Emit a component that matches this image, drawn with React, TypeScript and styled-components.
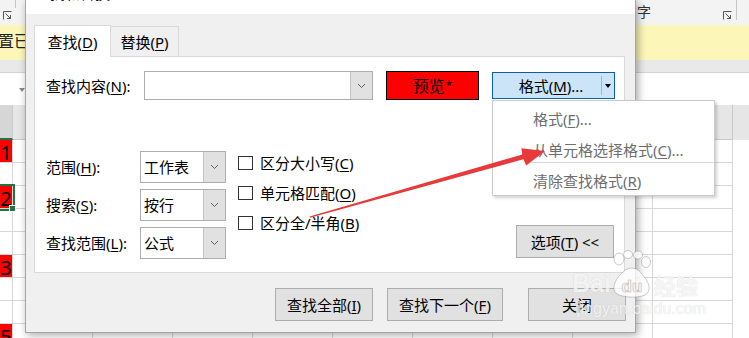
import React from "react";
import styled, { createGlobalStyle, css } from "styled-components";

const FONT = `"Noto Sans", "Noto Sans CJK SC", sans-serif`;

const Global = createGlobalStyle`
  html, body { margin: 0; padding: 0; background: #fff; }
  body { width: 749px; height: 338px; overflow: hidden; font-family: ${FONT}; }
`;

const Page = styled.div`
  position: relative;
  width: 749px;
  height: 338px;
  overflow: hidden;
  background: #fff;
`;

/* ---------- spreadsheet behind ---------- */
const Sheet = styled.div`
  display: flex;
  flex-direction: column;
  width: 749px;
`;

const Ribbon = styled.div`
  height: 25px;
  background: #f3f3f3;
  display: flex;
  align-items: flex-start;
`;

const Launcher = styled.svg<{ $ml: number }>`
  flex: none;
  margin: 11px 0 0 ${(p) => p.$ml}px;
`;

const RibbonTick = styled.div<{ $ml: number; $h: number }>`
  flex: none;
  width: 1px;
  height: ${(p) => p.$h}px;
  margin-left: ${(p) => p.$ml}px;
  background: #c6c6c6;
`;

const Gap = styled.div<{ $w: number }>`
  flex: none;
  width: ${(p) => p.$w}px;
`;

const GroupLabel = styled.div`
  flex: none;
  width: 14px;
  margin-top: 3px;
  font: 14px/18px ${FONT};
  color: #333;
`;

const MsgBar = styled.div`
  height: 35px;
  background: #fcf6b9;
  box-sizing: border-box;
  padding-top: 5px;
  font: 16px/22px ${FONT};
  color: #222;
  white-space: nowrap;
  overflow: hidden;
`;

const MsgText = styled.span`
  margin-left: -2px;
`;

const Strip = styled.div`
  height: 13px;
  background: #e9e9e9;
  border-bottom: 1px solid #d2d2d2;
  box-sizing: border-box;
`;

const FormulaBar = styled.div`
  height: 32px;
  background: #fff;
  display: flex;
  align-items: center;
  padding-left: 19px;
`;

const NameTri = styled.div`
  width: 0;
  height: 0;
  border-left: 3px solid transparent;
  border-right: 3px solid transparent;
  border-top: 4px solid #8a8a8a;
  margin-top: 2px;
`;

const Row = styled.div<{ $h?: number; $bg?: string }>`
  display: flex;
  flex: none;
  height: ${(p) => p.$h ?? 23}px;
  background: ${(p) => p.$bg ?? "#fff"};
`;

const Cell = styled.div<{ $w: number; $red?: boolean; $sel?: boolean; $head?: boolean; $hl?: boolean }>`
  flex: none;
  position: relative;
  width: ${(p) => p.$w}px;
  box-sizing: border-box;
  border-right: 1px solid ${(p) => (p.$head ? "#c9c9c9" : "#d6d6d6")};
  border-bottom: 1px solid ${(p) => (p.$head ? "#c9c9c9" : "#d6d6d6")};
  background: ${(p) => (p.$red ? "#ff0000" : p.$head ? (p.$hl ? "#d6d6d6" : "#e6e6e6") : "#fff")};
  font: 20px/25px ${FONT};
  color: #000;
  text-align: center;
  overflow: visible;
  ${(p) =>
    p.$hl &&
    css`
      border-bottom: 2px solid #217346;
    `}
  ${(p) =>
    p.$sel &&
    css`
      z-index: 1;
      outline: 2px solid #217346;
      &::after {
        content: "";
        position: absolute;
        right: -4px;
        bottom: -4px;
        width: 5px;
        height: 5px;
        background: #217346;
        border: 1px solid #fff;
      }
    `}
`;

/* ---------- dialog ---------- */
const Dialog = styled.div`
  position: absolute;
  left: 25px;
  top: 0;
  width: 611px;
  height: 333px;
  box-sizing: border-box;
  border: 1px solid #a6a6a6;
  border-top: none;
  background: #f0f0f0;
  box-shadow: 2px 2px 8px rgba(0, 0, 0, 0.35);
  display: flex;
  flex-direction: column;
  font: 15px/20px ${FONT};
  color: #000;
  z-index: 2;
`;

const TitleBar = styled.div`
  flex: none;
  height: 14px;
  background: #fff;
  overflow: hidden;
`;

const TitleText = styled.div`
  margin: -17px 0 0 9px;
  font: 15px/20px ${FONT};
  color: #000;
`;

const Body = styled.div`
  flex: 1;
  display: flex;
  flex-direction: column;
  padding: 11px 9px 0 8px;
`;

const TabsRow = styled.div`
  display: flex;
  align-items: flex-end;
  height: 31px;
`;

const Tab = styled.div<{ $active?: boolean; $w: number }>`
  flex: none;
  box-sizing: border-box;
  width: ${(p) => p.$w}px;
  display: flex;
  align-items: center;
  justify-content: center;
  border: 1px solid #d9d9d9;
  border-bottom: none;
  ${(p) =>
    p.$active
      ? css`
          height: 32px;
          margin-bottom: -1px;
          background: #fff;
          position: relative;
          z-index: 1;
        `
      : css`
          height: 30px;
          border-left: none;
          background: #f0f0f0;
        `}
`;

const Panel = styled.div`
  width: 591px;
  height: 217px;
  box-sizing: border-box;
  border: 1px solid #d9d9d9;
  background: #fff;
  display: flex;
  flex-direction: column;
  padding: 14px 0 0 11px;
`;

const U = styled.span`
  text-decoration: underline;
  text-underline-offset: 2px;
  text-decoration-thickness: 1px;
`;

const FindRow = styled.div`
  display: flex;
  align-items: center;
  height: 29px;
`;

const FieldLabel = styled.div<{ $w: number }>`
  flex: none;
  width: ${(p) => p.$w}px;
  white-space: nowrap;
`;

const Combo = styled.div<{ $w: number; $h: number }>`
  flex: none;
  display: flex;
  box-sizing: border-box;
  width: ${(p) => p.$w}px;
  height: ${(p) => p.$h}px;
  border: 1px solid #adadad;
  background: #fff;
`;

const ComboValue = styled.div`
  flex: 1;
  display: flex;
  align-items: center;
  padding-left: 3px;
  white-space: nowrap;
`;

const ComboDrop = styled.div`
  flex: none;
  width: 21px;
  background: #e1e1e1;
  border-left: 1px solid #c4c4c4;
  display: flex;
  align-items: center;
  justify-content: center;
`;

const Preview = styled.div`
  flex: none;
  margin-left: 13px;
  width: 93px;
  height: 29px;
  box-sizing: border-box;
  background: #ff0000;
  border: 1px solid #000;
  display: flex;
  align-items: center;
  justify-content: center;
  font: 16px/20px ${FONT};
`;

const Star = styled.span`
  font-size: 12px;
  margin-left: 1px;
`;

const FormatWrap = styled.div`
  flex: none;
  position: relative;
  margin-left: 13px;
  width: 123px;
  height: 27px;
`;

const FormatBtn = styled.div`
  display: flex;
  height: 100%;
  box-sizing: border-box;
  border: 1px solid #0b5ea8;
  background: #cce4f7;
`;

const FormatMain = styled.div`
  flex: 1;
  display: flex;
  align-items: center;
  justify-content: center;
  padding-left: 8px;
`;

const FormatSplit = styled.div`
  flex: none;
  width: 1px;
  margin: 3px 0;
  background: #9cb9d3;
`;

const FormatArrow = styled.div`
  flex: none;
  width: 12px;
  display: flex;
  align-items: center;
  justify-content: center;
`;

const MiniTri = styled.div`
  width: 0;
  height: 0;
  border-left: 3px solid transparent;
  border-right: 3px solid transparent;
  border-top: 4px solid #000;
`;

const Menu = styled.div`
  position: absolute;
  left: 0;
  top: 28px;
  width: 223px;
  height: 96px;
  box-sizing: border-box;
  background: #fff;
  border: 1px solid #cbcbcb;
  box-shadow: 2px 2px 3px rgba(0, 0, 0, 0.18);
  padding: 6px 0 0 0;
  z-index: 5;
  display: flex;
  flex-direction: column;
`;

const MenuItem = styled.div<{ $mt?: number }>`
  height: 24px;
  margin-top: ${(p) => p.$mt ?? 0}px;
  padding-left: 40px;
  display: flex;
  align-items: center;
  color: #6d6d6d;
  white-space: nowrap;
`;

const MenuSep = styled.div`
  height: 1px;
  margin: 0 0 6px 37px;
  background: #d7d7d7;
`;

const OptionsArea = styled.div`
  display: flex;
  align-items: flex-start;
  margin-top: 48px;
  height: 111px;
`;

const OptCol = styled.div`
  flex: none;
  display: flex;
  flex-direction: column;
  gap: 6px;
  padding-top: 3px;
`;

const OptRow = styled.div`
  display: flex;
  align-items: center;
  height: 32px;
`;

const CheckCol = styled.div`
  flex: none;
  display: flex;
  flex-direction: column;
  margin-left: 12px;
`;

const CheckRow = styled.div`
  display: flex;
  align-items: center;
  gap: 7px;
  height: 30px;
  white-space: nowrap;
`;

const Box = styled.div`
  flex: none;
  width: 15px;
  height: 14px;
  box-sizing: border-box;
  border: 1px solid #333;
  background: #fff;
`;

const Btn = styled.div<{ $w: number; $ml?: number }>`
  flex: none;
  width: ${(p) => p.$w}px;
  height: 33px;
  margin-left: ${(p) => p.$ml ?? 0}px;
  box-sizing: border-box;
  background: #e1e1e1;
  border: 1px solid #adadad;
  display: flex;
  align-items: center;
  justify-content: center;
  white-space: nowrap;
`;

const OptionsBtn = styled(Btn)`
  margin-left: auto;
  margin-right: 10px;
  align-self: flex-end;
  margin-bottom: 1px;
`;

const Footer = styled.div`
  display: flex;
  justify-content: flex-end;
  padding-top: 15px;
`;

/* ---------- overlays ---------- */
const ArrowSvg = styled.svg`
  position: absolute;
  left: 0;
  top: 0;
  z-index: 10;
  pointer-events: none;
`;

const Watermark = styled.div`
  position: absolute;
  left: 572px;
  top: 250px;
  z-index: 11;
  display: flex;
  flex-direction: column;
  color: rgba(255, 255, 255, 0.8);
  text-shadow: 0 0 1px rgba(140, 140, 140, 0.4);
  pointer-events: none;
`;

const WmTop = styled.div`
  display: flex;
  align-items: flex-end;
`;

const WmBai = styled.span`
  font: bold 25px/30px "Liberation Sans", sans-serif;
`;

const WmJy = styled.span`
  font: bold 22px/28px "Noto Sans CJK SC", sans-serif;
  margin-left: 1px;
`;

const WmUrl = styled.div`
  font: 16px/18px "Liberation Sans", sans-serif;
  margin: 2px 0 0 5px;
`;

const Chevron = () => (
  <svg width="9" height="6" viewBox="0 0 9 6">
    <path d="M1 1 L4.5 4.5 L8 1" fill="none" stroke="#606060" strokeWidth="1" />
  </svg>
);

const LauncherIcon = ({ ml }: { ml: number }) => (
  <Launcher $ml={ml} width="9" height="9" viewBox="0 0 9 9">
    <path d="M0.5 8.5 V0.5 H8.5" fill="none" stroke="#555" strokeWidth="1" />
    <path d="M2.5 2.5 L7.5 7.5 M4 7.5 H7.5 V4" fill="none" stroke="#555" strokeWidth="1" />
  </Launcher>
);

const rows: { v?: string; sel?: boolean }[] = [
  { v: "1" },
  {},
  { v: "2", sel: true },
  {},
  {},
  { v: "3" },
  {},
  {},
  { v: "5" },
];

const COLS = 9;

export default function App() {
  return (
    <Page>
      <Global />
      <Sheet>
        <Ribbon>
          <LauncherIcon ml={3} />
          <RibbonTick $ml={3} $h={8} />
          <Gap $w={621} />
          <GroupLabel>字</GroupLabel>
          <LauncherIcon ml={72} />
          <RibbonTick $ml={4} $h={20} />
        </Ribbon>
        <MsgBar>
          <MsgText>置已</MsgText>
        </MsgBar>
        <Strip />
        <FormulaBar>
          <NameTri />
        </FormulaBar>
        <Row $h={35} $bg="#e6e6e6">
          <Cell $w={13} $head $hl />
          {Array.from({ length: COLS }).map((_, i) => (
            <Cell key={i} $w={80} $head />
          ))}
        </Row>
        {rows.map((r, ri) => (
          <Row key={ri}>
            <Cell $w={13} $red={!!r.v} $sel={r.sel}>
              {r.v}
            </Cell>
            {Array.from({ length: COLS }).map((_, i) => (
              <Cell key={i} $w={80} />
            ))}
          </Row>
        ))}
      </Sheet>

      <Dialog>
        <TitleBar>
          <TitleText>查找和替换</TitleText>
        </TitleBar>
        <Body>
          <TabsRow>
            <Tab $active $w={77}>
              查找(<U>D</U>)
            </Tab>
            <Tab $w={68}>
              替换(<U>P</U>)
            </Tab>
          </TabsRow>
          <Panel>
            <FindRow>
              <FieldLabel $w={98}>
                查找内容(<U>N</U>):
              </FieldLabel>
              <Combo $w={229} $h={29}>
                <ComboValue />
                <ComboDrop>
                  <Chevron />
                </ComboDrop>
              </Combo>
              <Preview>
                预览<Star>*</Star>
              </Preview>
              <FormatWrap>
                <FormatBtn>
                  <FormatMain>
                    格式(<U>M</U>)...
                  </FormatMain>
                  <FormatSplit />
                  <FormatArrow>
                    <MiniTri />
                  </FormatArrow>
                </FormatBtn>
                <Menu>
                  <MenuItem>
                    格式(<U>F</U>)...
                  </MenuItem>
                  <MenuItem $mt={7}>
                    从单元格选择格式(<U>C</U>)...
                  </MenuItem>
                  <MenuSep />
                  <MenuItem>
                    清除查找格式(<U>R</U>)
                  </MenuItem>
                </Menu>
              </FormatWrap>
            </FindRow>
            <OptionsArea>
              <OptCol>
                <OptRow>
                  <FieldLabel $w={94}>
                    范围(<U>H</U>):
                  </FieldLabel>
                  <Combo $w={86} $h={32}>
                    <ComboValue>工作表</ComboValue>
                    <ComboDrop>
                      <Chevron />
                    </ComboDrop>
                  </Combo>
                </OptRow>
                <OptRow>
                  <FieldLabel $w={94}>
                    搜索(<U>S</U>):
                  </FieldLabel>
                  <Combo $w={86} $h={32}>
                    <ComboValue>按行</ComboValue>
                    <ComboDrop>
                      <Chevron />
                    </ComboDrop>
                  </Combo>
                </OptRow>
                <OptRow>
                  <FieldLabel $w={94}>
                    查找范围(<U>L</U>):
                  </FieldLabel>
                  <Combo $w={86} $h={32}>
                    <ComboValue>公式</ComboValue>
                    <ComboDrop>
                      <Chevron />
                    </ComboDrop>
                  </Combo>
                </OptRow>
              </OptCol>
              <CheckCol>
                <CheckRow>
                  <Box />
                  <span>
                    区分大小写(<U>C</U>)
                  </span>
                </CheckRow>
                <CheckRow>
                  <Box />
                  <span>
                    单元格匹配(<U>O</U>)
                  </span>
                </CheckRow>
                <CheckRow>
                  <Box />
                  <span>
                    区分全/半角(<U>B</U>)
                  </span>
                </CheckRow>
              </CheckCol>
              <OptionsBtn $w={98}>
                选项(<U>T</U>) &lt;&lt;
              </OptionsBtn>
            </OptionsArea>
          </Panel>
          <Footer>
            <Btn $w={98}>
              查找全部(<U>I</U>)
            </Btn>
            <Btn $w={116} $ml={14}>
              查找下一个(<U>F</U>)
            </Btn>
            <Btn $w={98} $ml={25}>
              关闭
            </Btn>
          </Footer>
        </Body>
      </Dialog>

      <ArrowSvg width="749" height="338" viewBox="0 0 749 338">
        <polygon
          points="310,217.8 523.4,159.3 526.2,165.6 545,151 521.4,148.2 522.2,154.5 309.6,216.4"
          fill="#e8393b"
        />
      </ArrowSvg>

      <Watermark>
        <WmTop>
          <WmBai>Bai</WmBai>
          <svg width="42" height="48" viewBox="0 0 42 48">
            <g fill="rgba(255,255,255,0.8)" stroke="rgba(140,140,140,0.45)" strokeWidth="1">
              <ellipse cx="8" cy="9" rx="5" ry="6" />
              <ellipse cx="17" cy="4.5" rx="4.5" ry="4" />
              <ellipse cx="27" cy="5" rx="4.5" ry="4" />
              <ellipse cx="35" cy="12" rx="4.5" ry="5.5" />
              <path d="M6 44 C0 40 3 30 12 22 C18 16 26 17 31 24 C37 31 42 40 34 45 C27 48 14 48 6 44 Z" />
            </g>
            <text
              x="21"
              y="42"
              textAnchor="middle"
              fontFamily="Liberation Sans, sans-serif"
              fontWeight="bold"
              fontSize="17"
              fill="rgba(255,255,255,0.85)"
              stroke="rgba(140,140,140,0.45)"
              strokeWidth="0.6"
            >
              du
            </text>
          </svg>
          <WmJy>经验</WmJy>
        </WmTop>
        <WmUrl>jingyan.baidu.com</WmUrl>
      </Watermark>
    </Page>
  );
}
